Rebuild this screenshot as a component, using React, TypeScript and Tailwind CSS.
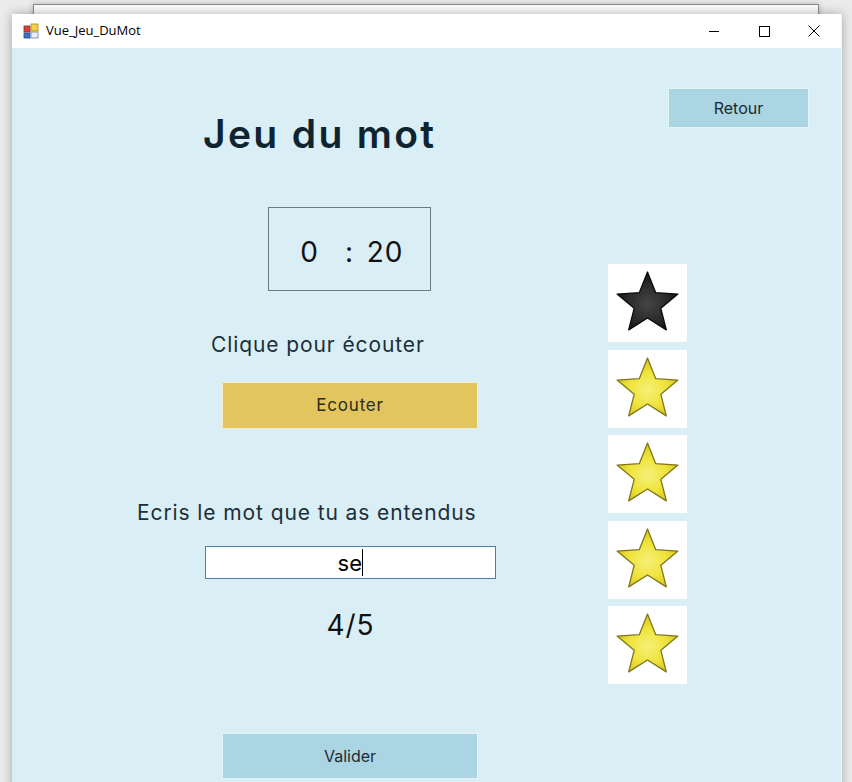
import React from 'react'

const STAR = 'M39 8 L47.23 28.67 L69.43 30.11 L52.32 44.33 L57.81 65.89 L39 54 L20.19 65.89 L25.68 44.33 L8.57 30.11 L30.77 28.67 Z'

function Star({ filled, id }: { filled: boolean; id: string }) {
  return (
    <svg width="79" height="78" viewBox="0 0 78 78">
      <defs>
        <radialGradient id={id} cx="50%" cy="55%" r="55%">
          {filled ? (
            <>
              <stop offset="0%" stopColor="#454545" />
              <stop offset="60%" stopColor="#2a2a2a" />
              <stop offset="100%" stopColor="#111111" />
            </>
          ) : (
            <>
              <stop offset="0%" stopColor="#f6f07a" />
              <stop offset="55%" stopColor="#efe43c" />
              <stop offset="100%" stopColor="#d4c41e" />
            </>
          )}
        </radialGradient>
      </defs>
      <path
        d={STAR}
        fill={`url(#${id})`}
        stroke={filled ? '#0a0a0a' : '#7f761a'}
        strokeWidth="1.3"
        strokeLinejoin="round"
      />
    </svg>
  )
}

function AppIcon() {
  return (
    <svg width="16" height="16" viewBox="0 0 16 16">
      <rect x="1" y="3" width="6" height="6" fill="#d9413a" stroke="#8a2520" strokeWidth="0.8" />
      <rect x="8" y="1" width="7" height="7" fill="#f5cf3c" stroke="#a9862a" strokeWidth="0.8" />
      <rect x="1" y="10" width="6" height="5" fill="#3f6fc8" stroke="#28498a" strokeWidth="0.8" />
      <rect x="8" y="9" width="7" height="6" fill="#e8eef8" stroke="#6f86b0" strokeWidth="0.8" />
    </svg>
  )
}

function TitleBar() {
  return (
    <div className="h-[34px] bg-white flex items-center pl-[11px] shrink-0">
      <AppIcon />
      <span className="ml-[7px] text-[13px] text-black font-['Open_Sans',sans-serif]">Vue_Jeu_DuMot</span>
      <div className="ml-auto flex pr-[2px] h-full">
        <div className="w-[50px] flex items-center justify-center">
          <div className="w-[10px] h-px bg-black" />
        </div>
        <div className="w-[50px] flex items-center justify-center">
          <div className="w-[11px] h-[11px] border border-black" />
        </div>
        <div className="w-[50px] flex items-center justify-center">
          <svg width="12" height="12" viewBox="0 0 12 12">
            <path d="M0.5 0.5 L11.5 11.5 M11.5 0.5 L0.5 11.5" stroke="#000" strokeWidth="1" />
          </svg>
        </div>
      </div>
    </div>
  )
}

export default function App() {
  const stars = [true, false, false, false, false]

  return (
    <div className="relative w-[852px] h-[782px] overflow-hidden bg-[#ebebeb] font-['Inter',sans-serif]">
      {/* window behind */}
      <div className="absolute left-[33px] top-[4px] w-[786px] h-[40px] bg-[#fafafa] border border-[#8c8c8c] shadow-[0_0_6px_rgba(0,0,0,0.25)]" />

      {/* main window */}
      <div className="absolute left-[12px] top-[14px] w-[830px] h-[790px] flex flex-col bg-[#d9eef5] border-r border-[#eef6f9] shadow-[0_0_10px_rgba(0,0,0,0.3)]">
        <TitleBar />

        <div className="flex flex-1 text-[#1c2f3a]">
          {/* left column */}
          <div className="w-[596px] flex flex-col items-start">
            <h1 className="ml-[191px] mt-[66px] text-[39px] leading-[39px] font-semibold tracking-[0.06em] text-[#0e2430]">
              Jeu du mot
            </h1>

            <div className="ml-[256px] mt-[54px] w-[163px] h-[84px] border border-[#6b7b82] flex items-center pt-[6px] text-[28px] leading-[28px] text-[#111]">
              <span className="ml-[25px] w-[30px] text-center">0</span>
              <span className="ml-[20px] w-[10px] text-center">:</span>
              <span className="ml-[11px] w-[40px] text-center tracking-[1px]">20</span>
            </div>

            <p className="ml-[199px] mt-[43px] text-[21px] leading-[21px] tracking-[0.9px]">Clique pour écouter</p>

            <button className="ml-[210px] mt-[27px] w-[256px] h-[47px] bg-[#e2c55f] border border-[#f4ecc8] text-[17px] tracking-[0.8px] text-[#2b2a1c]">
              Ecouter
            </button>

            <p className="ml-[125px] mt-[73px] text-[21px] leading-[21px] tracking-[0.9px]">Ecris le mot que tu as entendus</p>

            <div className="ml-[193px] mt-[23px] w-[291px] h-[33px] bg-white border-[1.5px] border-[#4d7fa6] flex items-center justify-center text-[22px] leading-[22px] text-black">
              <span>se</span>
              <span className="inline-block w-[1.5px] h-[27px] bg-black" />
            </div>

            <p className="ml-[193px] mt-[32px] w-[291px] text-center text-[28px] leading-[28px] tracking-[1px] text-[#111]">4/5</p>

            <button className="ml-[210px] mt-[94px] w-[256px] h-[46px] bg-[#acd5e3] border border-[#e6f3f8] text-[16px] text-[#1b2a30]">
              Valider
            </button>
          </div>

          {/* right column */}
          <div className="flex flex-col items-start">
            <button className="ml-[60px] mt-[40px] w-[141px] h-[40px] bg-[#acd5e3] border border-[#e6f3f8] text-[16px] text-[#1b2a30]">
              Retour
            </button>
            <div className="mt-[136px] flex flex-col gap-[7.5px]">
              {stars.map((filled, i) => (
                <div key={i} className="w-[79px] h-[78px] bg-white">
                  <Star filled={filled} id={`star-${i}`} />
                </div>
              ))}
            </div>
          </div>
        </div>
      </div>
    </div>
  )
}
